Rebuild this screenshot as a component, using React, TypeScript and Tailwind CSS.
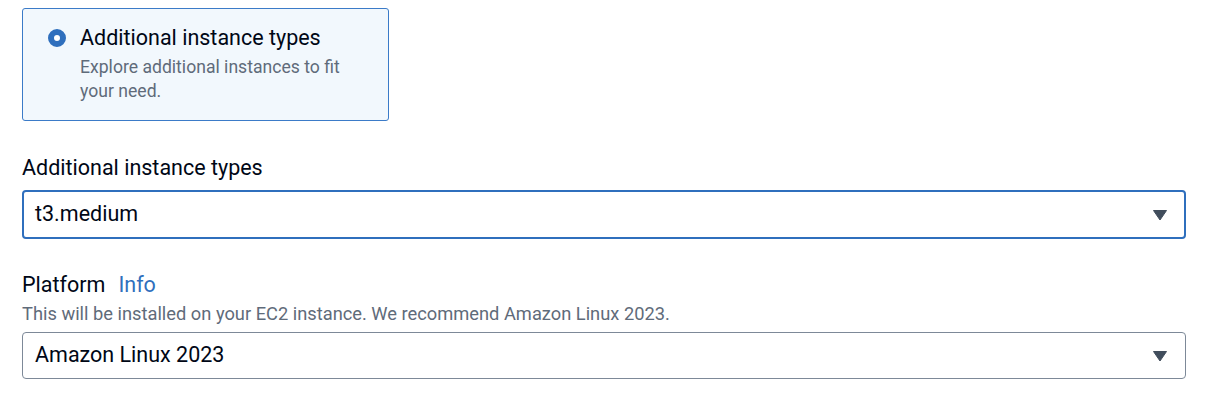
import React from "react";

function Caret() {
  return (
    <svg width="16" height="12" viewBox="0 0 16 12" className="shrink-0">
      <path d="M1.5 1.5 L14.5 1.5 L8 11 Z" fill="#414d5c" stroke="#414d5c" strokeWidth="1" strokeLinejoin="round" />
    </svg>
  );
}

export default function App() {
  return (
    <div className="w-[1208px] h-[404px] bg-white font-['Roboto',sans-serif] text-[#000716]">
      <div className="pt-[8px] pl-[22px] pr-[22px]">
        <div className="w-[367px] h-[113px] rounded-[3px] border border-[#3b7bc8] bg-[#f2f8fd] pl-[25px] pt-[15px]">
          <div className="flex items-start gap-[14px]">
            <div className="mt-[5px] w-[18px] h-[18px] rounded-full border-[6px] border-[#2f6fbd] bg-white shrink-0" />
            <div>
              <div className="text-[21.5px] leading-[28px]">Additional instance types</div>
              <div className="mt-[3px] text-[17.6px] leading-[24px] text-[#5f6b7a] w-[290px]">
                Explore additional instances to fit your need.
              </div>
            </div>
          </div>
        </div>

        <div className="mt-[33px] text-[21.5px] leading-[28px]">Additional instance types</div>
        <div className="mt-[8px] w-[1164px] h-[49px] rounded-[4px] border-2 border-[#2f6fbd] flex items-center justify-between pl-[11px] pr-[16px]">
          <span className="text-[21.5px]">t3.medium</span>
          <Caret />
        </div>

        <div className="mt-[32px] flex items-baseline gap-[13px] text-[21.5px] leading-[28px]">
          <span>Platform</span>
          <span className="text-[#2f6fbd]">Info</span>
        </div>
        <div className="mt-[3px] text-[18.3px] leading-[24px] text-[#5f6b7a]">
          This will be installed on your EC2 instance. We recommend Amazon Linux 2023.
        </div>
        <div className="mt-[6px] w-[1164px] h-[47px] rounded-[4px] border border-[#7d8998] flex items-center justify-between pl-[12px] pr-[17px]">
          <span className="text-[21.5px]">Amazon Linux 2023</span>
          <Caret />
        </div>
      </div>
    </div>
  );
}
